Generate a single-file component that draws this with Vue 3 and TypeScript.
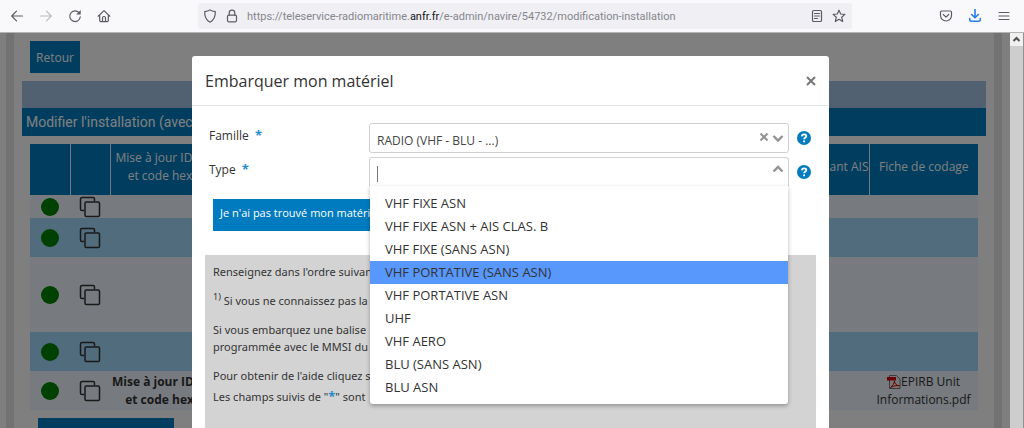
<script setup lang="ts">
import { ref } from 'vue'

interface Row {
  size: string
  update?: string[]
  file?: string
}

const rows: Row[] = [
  { size: 'short' },
  { size: 'medium' },
  { size: 'tall' },
  { size: 'medium' },
  { size: 'medium', update: ['Mise à jour ID', 'et code hex'], file: 'EPIRB Unit Informations.pdf' },
]

const options: string[] = [
  'VHF FIXE ASN',
  'VHF FIXE ASN + AIS CLAS. B',
  'VHF FIXE (SANS ASN)',
  'VHF PORTATIVE (SANS ASN)',
  'VHF PORTATIVE ASN',
  'UHF',
  'VHF AERO',
  'BLU (SANS ASN)',
  'BLU ASN',
]

const active = ref(3)
const search = ref('')
const family = ref('radio')
</script>

<template>
  <div class="browser">
    <header class="toolbar">
      <nav class="tools">
        <button type="button" aria-label="Page précédente">
          <svg viewBox="0 0 14 14"><path d="M12.5 7H2M6.5 2.2L1.7 7l4.8 4.8" /></svg>
        </button>
        <button type="button" class="dim" aria-label="Page suivante">
          <svg viewBox="0 0 14 14"><path d="M1.5 7H12M7.5 2.2L12.3 7l-4.8 4.8" /></svg>
        </button>
        <button type="button" aria-label="Actualiser">
          <svg viewBox="0 0 14 14"><path d="M12.3 7.8A5.300 5.300 0 1 1 11 3.700" /><path class="solid" d="M12.700 1v4.500H8.200z" /></svg>
        </button>
        <button type="button" aria-label="Accueil">
          <svg viewBox="0 0 14 14"><path d="M1.2 7.2L7 1.6l5.8 5.6M2.7 6v5.6q0 1 1 1h6.6q1 0 1-1V6M5.5 12.4V9q0-1.5 1.5-1.5T8.5 9v3.4" /></svg>
        </button>
      </nav>
      <div class="address">
        <svg class="ico" viewBox="0 0 14 14"><path d="M7 .9C5.600 2 3.700 2.500 1.700 2.600C1.500 7.500 3 11.300 7 13.200C11 11.300 12.500 7.500 12.300 2.600C10.300 2.500 8.400 2 7 .9z" /></svg>
        <svg class="ico lock" viewBox="0 0 14 14"><rect x="2.500" y="6.200" width="9" height="6.600" rx="1.200" /><path d="M4.200 6.200V4a2.800 2.800 0 0 1 5.600 0v2.200" /></svg>
        <span class="url">https://teleservice-radiomaritime.<b>anfr.fr</b>/e-admin/navire/54732/modification-installation</span>
        <button type="button" aria-label="Mode lecture">
          <svg viewBox="0 0 14 14"><rect x="2.500" y="1.500" width="9" height="11" rx="1.300" /><path d="M4.500 4.500h5M4.500 7h5M4.500 9.500h3" /></svg>
        </button>
        <button type="button" aria-label="Marquer cette page">
          <svg viewBox="0 0 14 14"><path d="M7 1.200l1.700 3.800 4.200.4-3.200 2.800 1 4.300L7 10.300l-3.700 2.200 1-4.300L1.100 5.400l4.200-.4z" /></svg>
        </button>
      </div>
      <div class="tools">
        <button type="button" aria-label="Pocket">
          <svg viewBox="0 0 14 14"><path d="M2.700 2h8.600q1.200 0 1.200 1.200v3.300a5.500 5.500 0 0 1-11 0V3.200Q1.500 2 2.700 2zM4.300 5.500L7 8.100l2.700-2.600" /></svg>
        </button>
        <button type="button" class="blue" aria-label="Téléchargements">
          <svg viewBox="0 0 14 14"><path d="M7 .5v8M3.700 5.500L7 8.800l3.300-3.300M1.700 9.500v1.300q0 1.500 1.500 1.500h7.600q1.500 0 1.500-1.500V9.500" /></svg>
        </button>
        <button type="button" aria-label="Menu">
          <svg viewBox="0 0 14 14"><path d="M2 3.500h10M2 7h10M2 10.500h10" /></svg>
        </button>
      </div>
    </header>

    <div class="viewport">
      <div class="canvas">
        <main class="page">
          <button type="button" class="btn back">Retour</button>
          <div class="band"></div>
          <h1>Modifier l'installation (avec</h1>
          <table>
            <colgroup><col class="c-dot" /><col class="c-dot" /><col /><col /><col class="c-file" /></colgroup>
            <thead>
              <tr>
                <th></th>
                <th></th>
                <th class="start plain"><span class="pair">Mise à jour ID<br />et code hex</span></th>
                <th class="end">ant AIS</th>
                <th>Fiche de codage</th>
              </tr>
            </thead>
            <tbody>
              <tr v-for="(row, i) in rows" :key="i" :class="row.size">
                <td><span class="dot"></span></td>
                <td>
                  <button type="button" class="copy" aria-label="Copier">
                    <svg viewBox="0 0 22 22"><path d="M5 14.500H3q-1.500 0-1.500-1.500V3Q1.500 1.500 3 1.500h11q1.500 0 1.500 1.500v2" /><rect x="6" y="6" width="14.500" height="14.500" rx="1.300" /></svg>
                  </button>
                </td>
                <td class="start bold">
                  <span v-if="row.update" class="pair">{{ row.update[0] }}<br />{{ row.update[1] }}</span>
                </td>
                <td></td>
                <td>
                  <a v-if="row.file" href="#" class="file"><svg viewBox="0 0 14 14"><path class="sheet" d="M2.500.5h7L13 4v9.500H2.500z" /><path class="flag" d="M0 2h9v3.500H0z" /><path class="mark" d="M3.500 12.500c2-1.200 4-4.500 3.800-6.500c.5 3 2.200 4.600 5 4.800c-3-.7-6 .2-8.800 1.700" /></svg>{{ row.file }}</a>
                </td>
              </tr>
            </tbody>
          </table>
          <button type="button" class="btn add" aria-label="Ajouter"></button>
        </main>

        <div class="backdrop">
          <section class="modal" role="dialog" aria-labelledby="modal-title">
            <header class="modal-head">
              <h2 id="modal-title">Embarquer mon matériel</h2>
              <button type="button" class="close" aria-label="Fermer">
                <svg viewBox="0 0 10 10"><path d="M1 1l8 8M9 1l-8 8" /></svg>
              </button>
            </header>

            <form class="form" @submit.prevent>
              <div class="field">
                <label for="family">Famille <span class="star">*</span></label>
                <div class="control">
                  <select id="family" v-model="family">
                    <option value="radio">RADIO (VHF - BLU - ...)</option>
                  </select>
                  <div class="signs">
                    <svg class="x" viewBox="0 0 10 10"><path d="M1.500 1.500l7 7M8.500 1.500l-7 7" /></svg>
                    <svg viewBox="0 0 14 14"><path d="M2.500 5L7 9.500 11.500 5" /></svg>
                  </div>
                </div>
                <button type="button" class="help" aria-label="Aide">
                  <svg viewBox="0 0 14 14"><circle cx="7" cy="7" r="7" /><path d="M4.800 5.300q.3-1.900 2.300-1.900 2.200 0 2.200 1.700 0 1-1.200 1.700-1 .6-1 1.500M7.100 9.500v1.800" /></svg>
                </button>
              </div>

              <div class="field">
                <label for="type">Type <span class="star">*</span></label>
                <div class="control open">
                  <div class="search">
                    <span class="caret"></span>
                    <input id="type" v-model="search" type="text" role="combobox" aria-expanded="true" aria-controls="types" autocomplete="off" />
                  </div>
                  <div class="signs">
                    <svg viewBox="0 0 14 14"><path d="M2.500 9.500L7 5l4.500 4.500" /></svg>
                  </div>
                  <ul id="types" class="menu" role="listbox">
                    <li v-for="(option, i) in options" :key="option" role="option" :aria-selected="i === active" :class="{ active: i === active }" @mouseenter="active = i">{{ option }}</li>
                  </ul>
                </div>
                <button type="button" class="help" aria-label="Aide">
                  <svg viewBox="0 0 14 14"><circle cx="7" cy="7" r="7" /><path d="M4.800 5.300q.3-1.900 2.300-1.900 2.200 0 2.200 1.700 0 1-1.200 1.700-1 .6-1 1.500M7.100 9.500v1.800" /></svg>
                </button>
              </div>

              <button type="button" class="btn missing">Je n'ai pas trouvé mon matériel</button>

              <div class="info">
                <p>Renseignez dans l'ordre suivant</p>
                <p><sup>1)</sup> Si vous ne connaissez pas la</p>
                <p>Si vous embarquez une balise<br />programmée avec le MMSI du</p>
                <p class="tight">Pour obtenir de l'aide cliquez s</p>
                <p>Les champs suivis de "<span class="star">*</span>" sont</p>
              </div>
            </form>
          </section>
        </div>
      </div>
      <div class="scrollbar">
        <span class="arrow"><svg viewBox="0 0 13 13"><path d="M3.500 8l3-3 3 3" /></svg></span>
      </div>
    </div>
  </div>
</template>

<style>
body {
  margin: 0;
  overflow: hidden;
}
</style>

<style scoped>
* {
  box-sizing: border-box;
}
.browser {
  height: 100vh;
  display: flex;
  flex-direction: column;
  overflow: hidden;
  font-family: "Open Sans", "Noto Sans", sans-serif;
  font-size: 12px;
  color: #333;
}
button {
  font: inherit;
  color: inherit;
  border: 0;
  padding: 0;
  background: none;
}
svg {
  display: block;
  fill: none;
  stroke: currentColor;
}
.toolbar {
  flex: none;
  height: 33px;
  display: flex;
  align-items: center;
  gap: 87px;
  padding: 0 13px 0 10px;
  background: #f9f9fb;
  border-bottom: 1px solid #b4b4b6;
  color: #5b5b66;
}
.tools {
  display: flex;
  gap: 15px;
}
.toolbar svg {
  width: 14px;
  height: 14px;
  flex: none;
  stroke-width: 1.200;
  stroke-linejoin: round;
  stroke-linecap: round;
}
.toolbar .solid {
  fill: currentColor;
  stroke: none;
}
.toolbar .dim {
  color: #bcbcc2;
}
.toolbar .blue {
  color: #2a7de8;
}
.toolbar .blue svg {
  stroke-width: 1.600;
}
.address {
  flex: 1;
  min-width: 0;
  height: 26px;
  display: flex;
  align-items: center;
  gap: 8px;
  padding: 0 6px 0 5px;
  background: #f0f0f4;
  border-radius: 3px;
}
.url {
  flex: 1;
  min-width: 0;
  overflow: hidden;
  white-space: nowrap;
  font-family: Roboto, sans-serif;
  font-size: 11px;
  color: #85858c;
}
.url b {
  font-weight: 400;
  color: #15141a;
}
.viewport {
  flex: 1;
  min-height: 0;
  display: flex;
  border-right: 1px solid #8d9299;
}
.canvas {
  flex: 1;
  min-width: 0;
  position: relative;
  overflow: hidden;
  background: #fff;
}
.page {
  height: 100%;
  margin: 0 8px 0 6px;
  padding: 8px 8px 0;
  border: solid #e4e4e4;
  border-width: 0 8px;
  overflow: hidden;
}
.btn {
  display: block;
  background: #007bbf;
  color: #fff;
}
.back {
  width: 50px;
  height: 32px;
  margin: 0 0 8px 8px;
}
.band {
  height: 27px;
  background: #a3c2e2;
}
h1 {
  margin: 0 0 8px;
  height: 28px;
  padding-left: 4px;
  background: #007bbf;
  color: #fff;
  font: 400 14px/28px Roboto, sans-serif;
}
table {
  width: calc(100% - 16px);
  margin-left: 8px;
  table-layout: fixed;
  border-collapse: collapse;
}
.c-dot {
  width: 40px;
}
.c-file {
  width: 109px;
}
th,
td {
  padding: 0;
  text-align: center;
  line-height: 18px;
}
th {
  height: 51px;
  padding-bottom: 6px;
  background: #007bbf;
  border-right: 1px solid #e4f0fa;
  color: #fff;
  font-weight: 400;
}
th.plain,
th:last-child {
  border-right: 0;
}
.start {
  text-align: left;
  padding-left: 5px;
}
td.start {
  padding-left: 2px;
}
.end {
  text-align: right;
}
.pair {
  display: inline-block;
  text-align: right;
}
.bold {
  font-weight: 700;
}
tr {
  background: #eff5ff;
}
tbody tr:nth-child(even) {
  background: #a0d8fa;
}
.short td {
  height: 23px;
}
.medium td {
  height: 39px;
}
.tall td {
  height: 75px;
}
.dot {
  display: block;
  width: 18px;
  height: 18px;
  margin: 0 auto;
  border-radius: 50%;
  background: #008000;
}
.copy {
  display: block;
  margin: 0 auto;
  color: #333;
}
.copy svg {
  width: 22px;
  height: 22px;
  stroke-width: 1.500;
}
.file {
  color: #333;
  text-decoration: none;
}
.file svg {
  display: inline-block;
  width: 14px;
  height: 14px;
  vertical-align: -3px;
}
.sheet {
  fill: #eee;
  stroke: #777;
}
.flag {
  fill: #d80000;
  stroke: none;
}
.mark {
  stroke: #d80000;
}
.add {
  width: 136px;
  height: 32px;
  margin: 8px 0 0 16px;
}
.backdrop {
  position: absolute;
  inset: 0;
  padding: 23px 181px 0 192px;
  background: rgba(0, 0, 0, 0.5);
}
.modal {
  min-height: 100%;
  background: #fff;
  border-radius: 3px 3px 0 0;
}
.modal-head {
  display: flex;
  align-items: center;
  justify-content: space-between;
  height: 50px;
  padding: 0 13px;
  border-bottom: 1px solid #e5e5e5;
}
h2 {
  margin: 0;
  font-size: 16px;
  font-weight: 400;
}
.close {
  color: #777;
}
.close svg {
  width: 10px;
  height: 10px;
  stroke-width: 2;
}
.form {
  padding: 17px 13px 0;
}
.field {
  display: flex;
  align-items: flex-start;
  gap: 8px;
  margin-bottom: 4px;
  padding-left: 4px;
}
label {
  flex: none;
  width: 152px;
  line-height: 26px;
}
.star {
  color: #1f8ccc;
  font-size: 13px;
  font-weight: 700;
  line-height: 12px;
}
label .star {
  margin-left: 3px;
}
.control {
  flex: 1;
  min-width: 0;
  height: 30px;
  display: flex;
  position: relative;
  border: 1px solid #d0d0d0;
  border-radius: 3px;
}
.open {
  border-bottom-color: transparent;
  border-radius: 3px 3px 0 0;
}
select {
  flex: 1;
  min-width: 0;
  padding: 4px 7px 0;
  border: 0;
  appearance: none;
  background: none;
  color: #444;
  font: inherit;
  outline: none;
}
.search {
  flex: 1;
  display: flex;
  padding: 8px 0 0 7px;
}
.caret {
  width: 1px;
  height: 16px;
  background: #777;
}
input {
  flex: 1;
  min-width: 0;
  height: 16px;
  padding: 0;
  border: 0;
  background: none;
  font: inherit;
  outline: none;
}
.signs {
  flex: none;
  display: flex;
  align-items: flex-start;
  gap: 2px;
  padding: 7px 3px 0 0;
  color: #929292;
}
.open .signs {
  padding-top: 4px;
}
.signs svg {
  width: 14px;
  height: 14px;
  stroke-width: 2.400;
}
.signs .x {
  width: 10px;
  height: 10px;
  margin-top: 1px;
  stroke-width: 2;
}
.help {
  flex: none;
  width: 14px;
  margin: 8px 5px 0 0;
  color: #007bbf;
}
.help svg {
  width: 14px;
  height: 14px;
}
.help circle {
  fill: currentColor;
  stroke: none;
}
.help path {
  stroke: #fff;
  stroke-width: 1.900;
}
.menu {
  position: absolute;
  top: 100%;
  left: 0;
  right: 0;
  z-index: 2;
  margin: 0;
  padding: 6px 0 5px;
  list-style: none;
  background: #fff;
  border-radius: 0 0 3px 3px;
  box-shadow: 0 2px 4px rgba(0, 0, 0, 0.3);
  font-size: 13px;
}
.menu li {
  padding: 0 15px;
  line-height: 23px;
}
.menu .active {
  background: #5897fb;
}
.missing {
  height: 32px;
  margin: 12px 0 24px 8px;
  padding: 0 7px 6px;
  font-size: 11px;
}
.info {
  min-height: 200px;
  padding: 8px;
  background: #d3d3d3;
  font-family: "Noto Sans", sans-serif;
  font-size: 11px;
}
p {
  margin: 0 0 12px;
  line-height: 17px;
}
p.tight {
  margin-bottom: 4px;
}
sup {
  font-size: 9px;
  line-height: 0;
}
.scrollbar {
  flex: none;
  width: 13px;
  background: #cdcdcd;
}
.arrow {
  display: block;
  background: #f0f0f0;
  color: #505050;
}
.arrow svg {
  width: 13px;
  height: 13px;
  stroke-width: 2;
}
</style>
